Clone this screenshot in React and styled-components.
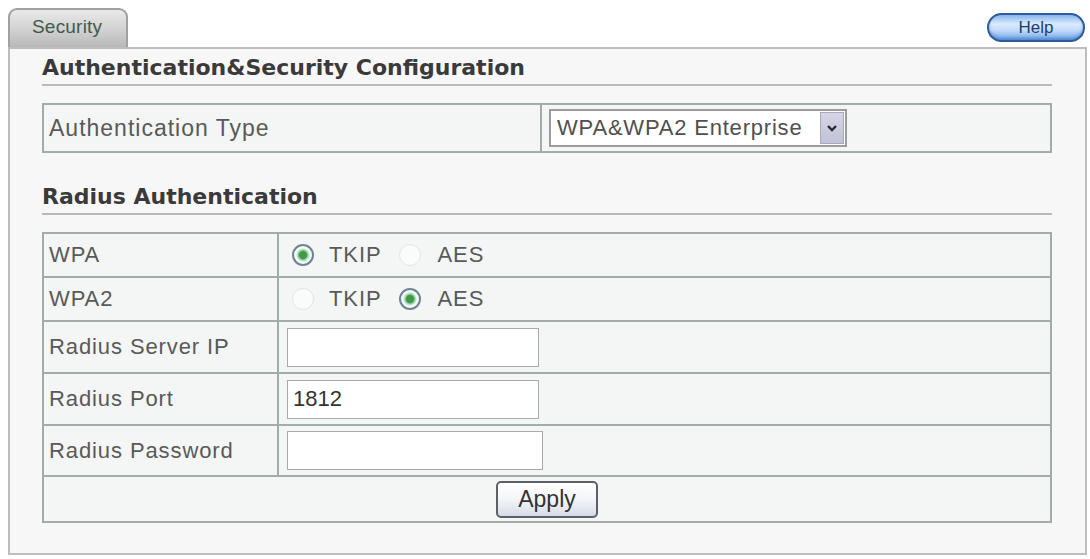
import React from "react";
import styled, { createGlobalStyle } from "styled-components";

const Global = createGlobalStyle`
  html, body { margin: 0; padding: 0; background: #ffffff; }
  body { font-family: "Liberation Sans", Arial, sans-serif; }
  * { box-sizing: border-box; }
`;

const Page = styled.div`
  width: 1090px;
  height: 559px;
  padding: 8px 3px 4px 8px;
  display: flex;
  flex-direction: column;
`;

const TabBar = styled.div`
  height: 39px;
  display: flex;
  align-items: flex-start;
  justify-content: space-between;
`;

const Tab = styled.div`
  width: 120px;
  height: 40px;
  border: 2px solid #a0a0a0;
  border-bottom: none;
  border-radius: 9px 9px 0 0;
  background: linear-gradient(#e9e9e9 0%, #d0d0d0 55%, #b6b6b6 100%);
  padding: 6px 0 0 22px;
  font-size: 19px;
  line-height: 22px;
  color: #3d5a4b;
  letter-spacing: 0.2px;
`;

const HelpButton = styled.button`
  margin: 5px 2px 0 0;
  width: 98px;
  height: 29px;
  border-radius: 15px;
  border: 2px solid #2c5c9c;
  background: linear-gradient(#86b5ee 0%, #dbeafd 36%, #c6dcf9 60%, #6ea6ea 100%);
  color: #1d3d6e;
  font-family: "Liberation Sans", Arial, sans-serif;
  font-size: 17px;
  padding: 0;
  text-align: center;
  box-shadow: inset 0 -2px 3px rgba(40, 90, 160, 0.4);
`;

const Panel = styled.div`
  flex: 1;
  border: 2px solid #bdbdbd;
  background: #f7f7f7;
  padding: 6px 33px 0 32px;
  display: flex;
  flex-direction: column;
`;

const Heading = styled.div`
  font-family: "DejaVu Sans", Verdana, sans-serif;
  font-weight: bold;
  font-size: 22px;
  line-height: 26px;
  color: #3a3a3a;
  padding-bottom: 3px;
  border-bottom: 2px solid #b9b9b9;
  margin-top: ${(p) => p.$top || 0}px;
`;

const Table = styled.table`
  border-collapse: collapse;
  width: 100%;
  margin-top: ${(p) => p.$top || 0}px;
  border: 2px solid #a0ada8;
  background: #f3f6f5;
`;

const Row = styled.tr`
  height: ${(p) => p.$h}px;
`;

const Label = styled.td`
  border: 2px solid #a0ada8;
  width: ${(p) => p.$w}px;
  padding: 0 0 0 5px;
  font-size: ${(p) => p.$size || 22}px;
  letter-spacing: ${(p) => p.$ls || 0.9}px;
  color: #595959;
  vertical-align: middle;
`;

const Value = styled.td`
  border: 2px solid #a0ada8;
  padding: 0 0 0 ${(p) => p.$pad ?? 8}px;
  vertical-align: middle;
  font-size: 22px;
  letter-spacing: ${(p) => (p.$center ? 0 : 0.9)}px;
  color: #595959;
  text-align: ${(p) => (p.$center ? "center" : "left")};
`;

const Select = styled.div`
  width: 298px;
  height: 38px;
  border: 2px solid #9c9c9c;
  background: #ffffff;
  display: flex;
  align-items: center;
  justify-content: space-between;
  padding: 0 1px 0 6px;
  font-size: 22px;
  color: #505050;
  letter-spacing: 0.8px;
`;

const Arrow = styled.span`
  width: 24px;
  height: 32px;
  background: linear-gradient(#d6d6e6, #c2c2d6);
  border: 1px solid #a8a8c0;
  display: flex;
  align-items: center;
  justify-content: center;
`;

const RadioGroup = styled.div`
  display: flex;
  align-items: center;
`;

const Radio = styled.span`
  width: 22px;
  height: 22px;
  border-radius: 50%;
  margin: 0 ${(p) => p.$after}px 0 ${(p) => p.$before}px;
  border: ${(p) => (p.$on ? "2px solid #6f8296" : "1.5px solid #e3e5e4")};
  background: ${(p) =>
    p.$on
      ? "radial-gradient(circle, #3c9a49 0 3.5px, #9fd3a7 5px, #f4fbf5 7px)"
      : "#fbfbfb"};
  display: inline-block;
  flex: none;
`;

const Option = styled.span`
  display: inline-block;
`;

const TextBox = styled.input`
  width: ${(p) => p.$w || 252}px;
  height: 39px;
  border: 1px solid #a9a9a9;
  background: #ffffff;
  font-family: "Liberation Sans", Arial, sans-serif;
  font-size: 22px;
  color: #333333;
  padding: 0 5px;
  outline: none;
  display: block;
`;

const ApplyButton = styled.button`
  width: 102px;
  height: 37px;
  border: 2px solid #5b6066;
  border-radius: 5px;
  background: linear-gradient(#ffffff 0%, #f4f5f8 50%, #d6dbe7 100%);
  font-family: "Liberation Sans", Arial, sans-serif;
  font-size: 23px;
  color: #333333;
  padding: 0;
  display: inline-block;
  vertical-align: middle;
`;

export default function App() {
  return (
    <>
      <Global />
      <Page>
        <TabBar>
          <Tab>Security</Tab>
          <HelpButton>Help</HelpButton>
        </TabBar>
        <Panel>
          <Heading>Authentication&amp;Security Configuration</Heading>
          <Table $top={17}>
            <tbody>
              <Row $h={48}>
                <Label $w={498} $size={23} $ls={1}>Authentication Type</Label>
                <Value $pad={7}>
                  <Select>
                    <span>WPA&amp;WPA2 Enterprise</span>
                    <Arrow>
                      <svg width="12" height="10" viewBox="0 0 12 10">
                        <path d="M2 3 L6 7 L10 3" fill="none" stroke="#2a2a3a" strokeWidth="2.4" />
                      </svg>
                    </Arrow>
                  </Select>
                </Value>
              </Row>
            </tbody>
          </Table>
          <Heading $top={31}>Radius Authentication</Heading>
          <Table $top={17}>
            <tbody>
              <Row $h={44}>
                <Label $w={235}>WPA</Label>
                <Value $pad={8}>
                  <RadioGroup>
                    <Radio $on $before={5} $after={15} />
                    <Option>TKIP</Option>
                    <Radio $before={17} $after={17} />
                    <Option>AES</Option>
                  </RadioGroup>
                </Value>
              </Row>
              <Row $h={44}>
                <Label>WPA2</Label>
                <Value $pad={8}>
                  <RadioGroup>
                    <Radio $before={5} $after={15} />
                    <Option>TKIP</Option>
                    <Radio $on $before={17} $after={17} />
                    <Option>AES</Option>
                  </RadioGroup>
                </Value>
              </Row>
              <Row $h={52}>
                <Label>Radius Server IP</Label>
                <Value>
                  <TextBox defaultValue="" />
                </Value>
              </Row>
              <Row $h={52}>
                <Label>Radius Port</Label>
                <Value>
                  <TextBox defaultValue="1812" />
                </Value>
              </Row>
              <Row $h={51}>
                <Label>Radius Password</Label>
                <Value>
                  <TextBox type="password" $w={256} defaultValue="" />
                </Value>
              </Row>
              <Row $h={46}>
                <Value colSpan={2} $center $pad={0}>
                  <ApplyButton>Apply</ApplyButton>
                </Value>
              </Row>
            </tbody>
          </Table>
        </Panel>
      </Page>
    </>
  );
}
